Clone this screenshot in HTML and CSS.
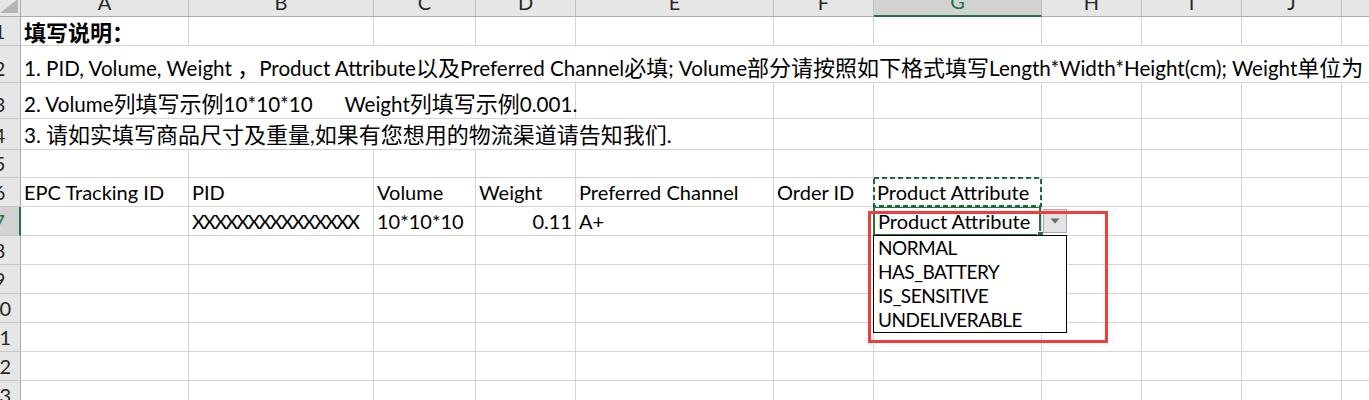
FILE: index.html
```html
<!DOCTYPE html>
<html lang="zh-CN">
<head>
<meta charset="utf-8">
<title>Sheet</title>
<link rel="stylesheet" href="styles.css">
</head>
<body>
<div class="sheet">
  <!-- column headers -->
  <div class="corner"></div>
  <div class="ch">A</div><div class="ch">B</div><div class="ch">C</div><div class="ch">D</div><div class="ch">E</div><div class="ch">F</div><div class="ch sel">G</div><div class="ch">H</div><div class="ch">I</div><div class="ch">J</div><div class="ch">K</div>

  <!-- row 1 -->
  <div class="rh">1</div>
  <div class="c"><span class="t zh bold">填写说明：</span></div>
  <div class="c"></div><div class="c"></div><div class="c"></div><div class="c"></div><div class="c"></div><div class="c"></div><div class="c"></div><div class="c"></div><div class="c"></div><div class="c"></div>

  <!-- row 2 -->
  <div class="rh">2</div>
  <div class="c span11"><span class="t big">1. PID, Volume, Weight <span class="zh">，</span>Product Attribute<span class="zh">以及</span>Preferred Channel<span class="zh">必填</span>; Volume<span class="zh">部分请按照如下格式填写</span>Length*Width*Height(cm); Weight<span class="zh">单位为</span></span></div>

  <!-- row 3 -->
  <div class="rh">3</div>
  <div class="c span4"><span class="t big pre">2. Volume<span class="zh">列填写示例</span>10*10*10      Weight<span class="zh">列填写示例</span>0.001.</span></div>
  <div class="c"></div><div class="c"></div><div class="c"></div><div class="c"></div><div class="c"></div><div class="c"></div><div class="c"></div>

  <!-- row 4 -->
  <div class="rh">4</div>
  <div class="c span5"><span class="t big">3. <span class="zh">请如实填写商品尺寸及重量</span>,<span class="zh">如果有您想用的物流渠道请告知我们</span>.</span></div>
  <div class="c"></div><div class="c"></div><div class="c"></div><div class="c"></div><div class="c"></div><div class="c"></div>

  <!-- row 5 -->
  <div class="rh">5</div>
  <div class="c"></div><div class="c"></div><div class="c"></div><div class="c"></div><div class="c"></div><div class="c"></div><div class="c"></div><div class="c"></div><div class="c"></div><div class="c"></div><div class="c"></div>

  <!-- row 6 -->
  <div class="rh">6</div>
  <div class="c">EPC Tracking ID</div>
  <div class="c">PID</div>
  <div class="c">Volume</div>
  <div class="c">Weight</div>
  <div class="c">Preferred Channel</div>
  <div class="c">Order ID</div>
  <div class="c marquee-cell">Product Attribute
    <svg class="marquee" width="169" height="30" viewBox="0 0 169 30"><rect x="1" y="1" width="167" height="28" fill="none" stroke="#1f6a3d" stroke-width="2" stroke-dasharray="5 3"/></svg>
  </div>
  <div class="c"></div><div class="c"></div><div class="c"></div><div class="c"></div>

  <!-- row 7 -->
  <div class="rh sel">7</div>
  <div class="c"></div>
  <div class="c ids">XXXXXXXXXXXXXXX</div>
  <div class="c">10*10*10</div>
  <div class="c num">0.11</div>
  <div class="c">A+</div>
  <div class="c"></div>
  <div class="c active-cell">Product Attribute
    <span class="sel-frame"></span>
    <span class="handle"></span>
    <span class="dd-btn"><svg width="10" height="6" viewBox="0 0 10 6"><path d="M0.5 0.5h9l-4.5 5z" fill="#6b6b6b"/></svg></span>
    <ul class="dd-list">
      <li>NORMAL</li>
      <li>HAS_BATTERY</li>
      <li>IS_SENSITIVE</li>
      <li>UNDELIVERABLE</li>
    </ul>
    <span class="callout"></span>
  </div>
  <div class="c"></div><div class="c"></div><div class="c"></div><div class="c"></div>

  <!-- rows 8-13 -->
  <div class="rh">8</div>
  <div class="c"></div><div class="c"></div><div class="c"></div><div class="c"></div><div class="c"></div><div class="c"></div><div class="c"></div><div class="c"></div><div class="c"></div><div class="c"></div><div class="c"></div>
  <div class="rh">9</div>
  <div class="c"></div><div class="c"></div><div class="c"></div><div class="c"></div><div class="c"></div><div class="c"></div><div class="c"></div><div class="c"></div><div class="c"></div><div class="c"></div><div class="c"></div>
  <div class="rh">10</div>
  <div class="c"></div><div class="c"></div><div class="c"></div><div class="c"></div><div class="c"></div><div class="c"></div><div class="c"></div><div class="c"></div><div class="c"></div><div class="c"></div><div class="c"></div>
  <div class="rh">11</div>
  <div class="c"></div><div class="c"></div><div class="c"></div><div class="c"></div><div class="c"></div><div class="c"></div><div class="c"></div><div class="c"></div><div class="c"></div><div class="c"></div><div class="c"></div>
  <div class="rh">12</div>
  <div class="c"></div><div class="c"></div><div class="c"></div><div class="c"></div><div class="c"></div><div class="c"></div><div class="c"></div><div class="c"></div><div class="c"></div><div class="c"></div><div class="c"></div>
  <div class="rh">13</div>
  <div class="c"></div><div class="c"></div><div class="c"></div><div class="c"></div><div class="c"></div><div class="c"></div><div class="c"></div><div class="c"></div><div class="c"></div><div class="c"></div><div class="c"></div>
</div>
</body>
</html>
```

FILE: styles.css
```css
html, body {
  margin: 0;
  padding: 0;
  background: #ffffff;
  overflow: hidden;
}

body {
  width: 1369px;
  height: 400px;
  font-family: Lato, "Noto Sans CJK SC", sans-serif;
  font-size: 20px;
  color: #000000;
}

.sheet {
  display: grid;
  grid-template-columns: 42px 168px 185px 102px 100px 198px 100px 168px 100px 100px 100px 100px;
  grid-template-rows: 27px 29px 37px 36px 31px 28px 29px repeat(7, 29px);
  margin: -10px 0 0 -21px;
  width: max-content;
}

.corner,
.ch,
.rh,
.c {
  box-sizing: border-box;
  display: flex;
  align-items: flex-end;
  line-height: 22px;
  white-space: nowrap;
  min-width: 0;
  padding-bottom: 3px;
}

.corner {
  position: relative;
  background: #e6e6e6;
  border-right: 1px solid #ababab;
  border-bottom: 1px solid #ababab;
}

.corner::after {
  content: "";
  position: absolute;
  right: 2px;
  bottom: 3px;
  border-style: solid;
  border-width: 0 0 14px 18px;
  border-color: transparent transparent #b4b4b4 transparent;
}

.ch {
  justify-content: center;
  background: #e6e6e6;
  color: #262626;
  border-right: 1px solid #bfbfbf;
  border-bottom: 1px solid #ababab;
}

.ch.sel {
  background: #d2d2d2;
  color: #217346;
  border-bottom: 2px solid #217346;
}

.rh {
  justify-content: center;
  background: #e6e6e6;
  color: #262626;
  border-right: 1px solid #ababab;
  border-bottom: 1px solid #c8c8c8;
}

.rh.sel {
  background: #d2d2d2;
  color: #217346;
  border-right: 2px solid #217346;
}

.c {
  padding-left: 3px;
  padding-right: 3px;
  border-right: 1px solid #d4d4d4;
  border-bottom: 1px solid #d4d4d4;
}

.span11 { grid-column: span 11; }
.span5 { grid-column: span 5; }
.span4 { grid-column: span 4; }

.num { justify-content: flex-end; }

.ids { letter-spacing: -1.9px; }

.pre { white-space: pre; }

.big { font-size: 20.6px; }

.zh {
  font-family: "Noto Sans CJK SC", sans-serif;
  font-size: 22px;
}

.bold { font-weight: 700; }

/* copy marquee on G6 */
.marquee-cell {
  position: relative;
  z-index: 4;
}

.marquee {
  position: absolute;
  left: -1px;
  top: -1px;
  display: block;
}

/* active cell G7 with validation dropdown */
.active-cell {
  position: relative;
  z-index: 3;
  padding-left: 4px;
}

.sel-frame {
  position: absolute;
  left: -1px;
  top: -1px;
  width: 168px;
  height: 30px;
  box-sizing: border-box;
  border: 2px solid #217346;
}

.handle {
  position: absolute;
  left: 163px;
  top: 24px;
  width: 7px;
  height: 7px;
  box-sizing: border-box;
  background: #217346;
  border: 1px solid #ffffff;
}

.dd-btn {
  position: absolute;
  left: 169px;
  top: 2px;
  width: 24px;
  height: 24px;
  box-sizing: border-box;
  background: #e3e3e7;
  border: 1px solid #a8a8a8;
  display: flex;
  align-items: center;
  justify-content: center;
}

.dd-btn svg { display: block; }

.dd-list {
  position: absolute;
  left: -1px;
  top: 28px;
  width: 194px;
  height: 98px;
  box-sizing: border-box;
  margin: 0;
  padding: 0 0 0 4px;
  list-style: none;
  background: #ffffff;
  border: 1px solid #000000;
  line-height: 24px;
  font-size: 19px;
  letter-spacing: -0.5px;
}

.callout {
  position: absolute;
  left: -6px;
  top: 4px;
  width: 240px;
  height: 132px;
  box-sizing: border-box;
  border: 3px solid #f23d3d;
}
```
